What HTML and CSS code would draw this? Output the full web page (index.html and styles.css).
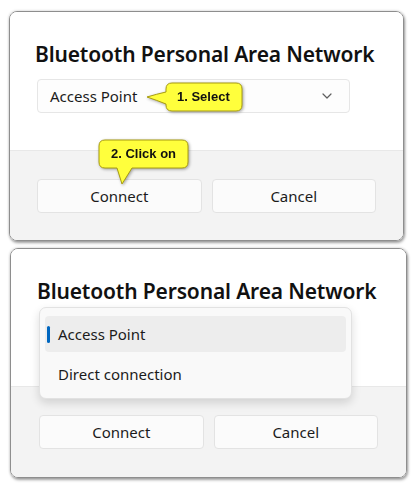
FILE: index.html
```html
<!DOCTYPE html>
<html>

<head>
    <meta charset="UTF-8">
    <title>Bluetooth Personal Area Network</title>
    <link rel="stylesheet" href="styles.css">
</head>

<body>
    <div class="dialog first">
        <div class="dialog-body">
            <h1 class="title">Bluetooth Personal Area Network</h1>
            <div class="combo">
                <span>Access Point</span>
                <svg class="chevron" width="10" height="6" viewBox="0 0 10 6">
                    <path d="M1 1 L5 5 L9 1" fill="none" stroke="#5f5f5f" stroke-width="1.2" stroke-linecap="round" stroke-linejoin="round"/>
                </svg>
            </div>
        </div>
        <div class="dialog-footer">
            <button class="btn">Connect</button>
            <button class="btn">Cancel</button>
        </div>
    </div>

    <div class="dialog second">
        <div class="dialog-body">
            <h1 class="title">Bluetooth Personal Area Network</h1>
            <div class="combo open">
                <div class="menu">
                    <div class="item selected">Access Point</div>
                    <div class="item">Direct connection</div>
                </div>
            </div>
        </div>
        <div class="dialog-footer">
            <button class="btn">Connect</button>
            <button class="btn">Cancel</button>
        </div>
    </div>

    <!-- yellow callouts -->
    <div class="callout callout-select">
        <svg width="102" height="34" viewBox="0 0 102 34">
            <path d="M28 3 H92 Q98 3 98 9 V25 Q98 31 92 31 H28 Q22 31 22 25 V24 Q12 20 3 17 Q13 14 22 12 V9 Q22 3 28 3 Z"
                fill="#ffff3c" stroke="#a89c10" stroke-width="1"/>
        </svg>
        <span>1. Select</span>
    </div>
    <div class="callout callout-click">
        <svg width="95" height="50" viewBox="0 0 95 50">
            <path d="M9 3 H86 Q92 3 92 9 V25 Q92 31 86 31 H36 L26 47 L21 31 H9 Q3 31 3 25 V9 Q3 3 9 3 Z"
                fill="#ffff3c" stroke="#a89c10" stroke-width="1"/>
        </svg>
        <span>2. Click on</span>
    </div>
</body>
</html>
```

FILE: styles.css
```css
* {
    margin: 0;
    padding: 0;
    box-sizing: border-box;
}

body {
    position: relative;
    width: 416px;
    height: 488px;
    background: #fff;
    font-family: "Noto Sans", "Open Sans", sans-serif;
    color: #1b1b1b;
    overflow: hidden;
}

.dialog {
    height: 230px;
    display: flex;
    flex-direction: column;
    border: 1px solid #8e8e8e;
    border-radius: 8px;
    overflow: hidden;
    box-shadow: 1px 2px 3px rgba(0, 0, 0, 0.35), 0 0 3px rgba(0, 0, 0, 0.2);
}

.first {
    width: 395px;
    margin: 11px 0 0 9px;
}

.second {
    width: 397px;
    margin: 7px 0 0 10px;
}

.dialog-body {
    height: 138px;
    flex: none;
    background: #fff;
    padding: 28px 27px 0 25px;
}

.second .dialog-body {
    height: 137px;
    padding-left: 26px;
}

.title {
    font-size: 21px;
    font-weight: 600;
    line-height: 28px;
    letter-spacing: -0.15px;
    color: #111;
    white-space: nowrap;
}

.combo {
    position: relative;
    width: 313px;
    height: 34px;
    margin: 11px 0 0 2px;
    display: flex;
    align-items: center;
    justify-content: space-between;
    padding: 0 17px 0 12px;
    background: #fdfdfd;
    border: 1px solid #e6e6e6;
    border-radius: 4px;
    font-size: 15px;
}

.chevron {
    display: block;
}

.menu {
    position: absolute;
    top: -10px;
    left: -1px;
    width: 313px;
    height: 92px;
    padding: 8px 5px;
    display: flex;
    flex-direction: column;
    gap: 4px;
    background: #f9f9f9;
    border: 1px solid #e2e2e2;
    border-radius: 7px;
    box-shadow: 0 4px 10px rgba(0, 0, 0, 0.14);
}

.item {
    position: relative;
    height: 36px;
    line-height: 36px;
    padding-left: 13px;
    border-radius: 4px;
    font-size: 15px;
}

.item.selected {
    background: #ededed;
}

.item.selected::before {
    content: "";
    position: absolute;
    left: 2px;
    top: 10px;
    width: 3px;
    height: 17px;
    border-radius: 2px;
    background: #0067c0;
}

.dialog-footer {
    flex: 1;
    background: #f3f3f3;
    border-top: 1px solid #e8e8e8;
    padding: 28px 27px 0 27px;
    display: grid;
    grid-template-columns: 1fr 1fr;
    gap: 10px;
    align-content: start;
}

.second .dialog-footer {
    padding: 28px 28px 0 28px;
}

.btn {
    height: 34px;
    background: #fbfbfb;
    border: 1px solid #e3e3e3;
    border-radius: 4px;
    font-family: inherit;
    font-size: 15px;
    color: #1b1b1b;
}

.callout {
    position: absolute;
    filter: drop-shadow(1px 1px 1.5px rgba(0, 0, 0, 0.35));
}

.callout svg {
    display: block;
}

.callout span {
    position: absolute;
    font-family: "Liberation Sans", Arial, sans-serif;
    font-weight: bold;
    font-size: 13px;
    line-height: 28px;
    color: #111;
    white-space: nowrap;
}

.callout-select {
    left: 144px;
    top: 80px;
}

.callout-select span {
    left: 33px;
    top: 3px;
}

.callout-click {
    left: 96px;
    top: 137px;
}

.callout-click span {
    left: 15px;
    top: 3px;
}
```
